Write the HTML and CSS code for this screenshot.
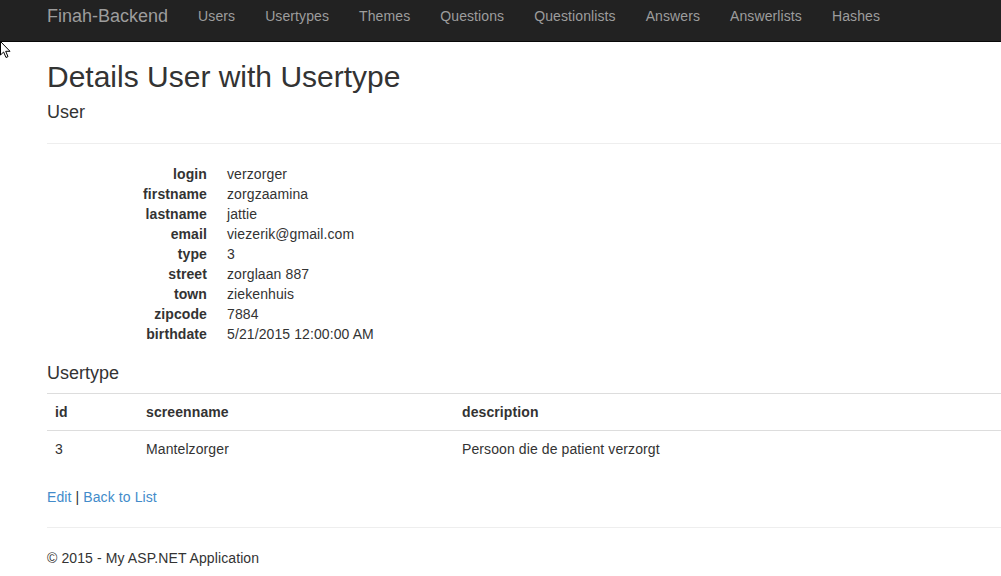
FILE: index.html
```html
<!DOCTYPE html>
<html>
<head>
<meta charset="utf-8">
<title>Details - Finah-Backend</title>
<link rel="stylesheet" href="styles.css">
</head>
<body>
<div class="navbar">
  <div class="container nav-inner">
    <a class="navbar-brand" href="#">Finah-Backend</a>
    <ul class="navbar-nav">
      <li><a href="#">Users</a></li>
      <li><a href="#">Usertypes</a></li>
      <li><a href="#">Themes</a></li>
      <li><a href="#">Questions</a></li>
      <li><a href="#">Questionlists</a></li>
      <li><a href="#">Answers</a></li>
      <li><a href="#">Answerlists</a></li>
      <li><a href="#">Hashes</a></li>
    </ul>
  </div>
</div>

<div class="container body-content">
  <h2>Details User with Usertype</h2>
  <h4>User</h4>
  <hr>
  <dl class="dl-horizontal">
    <dt>login</dt><dd>verzorger</dd>
    <dt>firstname</dt><dd>zorgzaamina</dd>
    <dt>lastname</dt><dd>jattie</dd>
    <dt>email</dt><dd>viezerik@gmail.com</dd>
    <dt>type</dt><dd>3</dd>
    <dt>street</dt><dd>zorglaan 887</dd>
    <dt>town</dt><dd>ziekenhuis</dd>
    <dt>zipcode</dt><dd>7884</dd>
    <dt>birthdate</dt><dd>5/21/2015 12:00:00 AM</dd>
  </dl>

  <h4 class="table-title">Usertype</h4>
  <table class="table">
    <colgroup>
      <col class="col-id">
      <col class="col-screen">
      <col>
    </colgroup>
    <tr>
      <th>id</th>
      <th>screenname</th>
      <th>description</th>
    </tr>
    <tr>
      <td>3</td>
      <td>Mantelzorger</td>
      <td>Persoon die de patient verzorgt</td>
    </tr>
  </table>

  <p class="actions"><a href="#">Edit</a> | <a href="#">Back to List</a></p>

  <hr>
  <footer>
    <p>© 2015 - My ASP.NET Application</p>
  </footer>
</div>

<svg class="cursor" width="14" height="20" viewBox="0 0 14 20">
  <path d="M0.5 0.5 L0.5 14 L3.6 11 L6 16.5 L8 15.6 L5.7 10.3 L10 10.3 Z" fill="#fff" stroke="#000" stroke-width="1"/>
</svg>
</body>
</html>
```

FILE: styles.css
```css
html, body {
  margin: 0;
  padding: 0;
  overflow: hidden;
}

body {
  font-family: "Liberation Sans", Arial, Helvetica, sans-serif;
  font-size: 14px;
  line-height: 20px;
  letter-spacing: 0.1px;
  color: #333;
  background: #fff;
  width: 1204px;
  position: relative;
}

a {
  color: #428bca;
  text-decoration: none;
}

.container {
  width: 1170px;
  margin-left: 17px;
  padding: 0 15px;
  box-sizing: border-box;
}

.navbar {
  margin-top: -9px;
  height: 50px;
  background: #222;
  border-bottom: 1px solid #080808;
}

.nav-inner {
  display: flex;
  align-items: flex-start;
}

.navbar-brand {
  display: block;
  padding: 15px;
  font-size: 18px;
  line-height: 20px;
  letter-spacing: 0;
  color: #9d9d9d;
}

.navbar-nav {
  display: flex;
  list-style: none;
  margin: 0;
  padding: 0;
}

.navbar-nav a {
  display: block;
  padding: 15px;
  line-height: 20px;
  color: #9d9d9d;
}

.body-content {
  margin-top: -2px;
  padding-left: 30px;
  padding-right: 30px;
}

h2 {
  font-size: 30px;
  font-weight: 500;
  line-height: 1.1;
  letter-spacing: 0;
  margin: 20px 0 10px;
}

h4 {
  font-size: 18px;
  font-weight: 500;
  line-height: 1.1;
  letter-spacing: 0;
  margin: 10px 0 10px;
}

.table-title {
  margin-bottom: 9px;
}

hr {
  margin: 20px 0;
  border: 0;
  border-top: 1px solid #eee;
  height: 0;
}

.dl-horizontal {
  display: grid;
  grid-template-columns: 160px 1fr;
  column-gap: 20px;
  margin: 0 0 20px;
}

.dl-horizontal dt {
  font-weight: bold;
  text-align: right;
  white-space: nowrap;
}

.dl-horizontal dd {
  margin: 0;
}

.table {
  width: 100%;
  border-collapse: collapse;
  border-spacing: 0;
  margin-bottom: 20px;
}

.col-id {
  width: 91px;
}

.col-screen {
  width: 316px;
}

.table th,
.table td {
  padding: 8px;
  line-height: 20px;
  text-align: left;
  vertical-align: top;
  border-top: 1px solid #ddd;
}

.table th {
  font-weight: bold;
}

.actions {
  margin: 0 0 10px;
}

footer p {
  margin: 0 0 10px;
}

.cursor {
  position: absolute;
  left: 0;
  top: 41px;
}
```
